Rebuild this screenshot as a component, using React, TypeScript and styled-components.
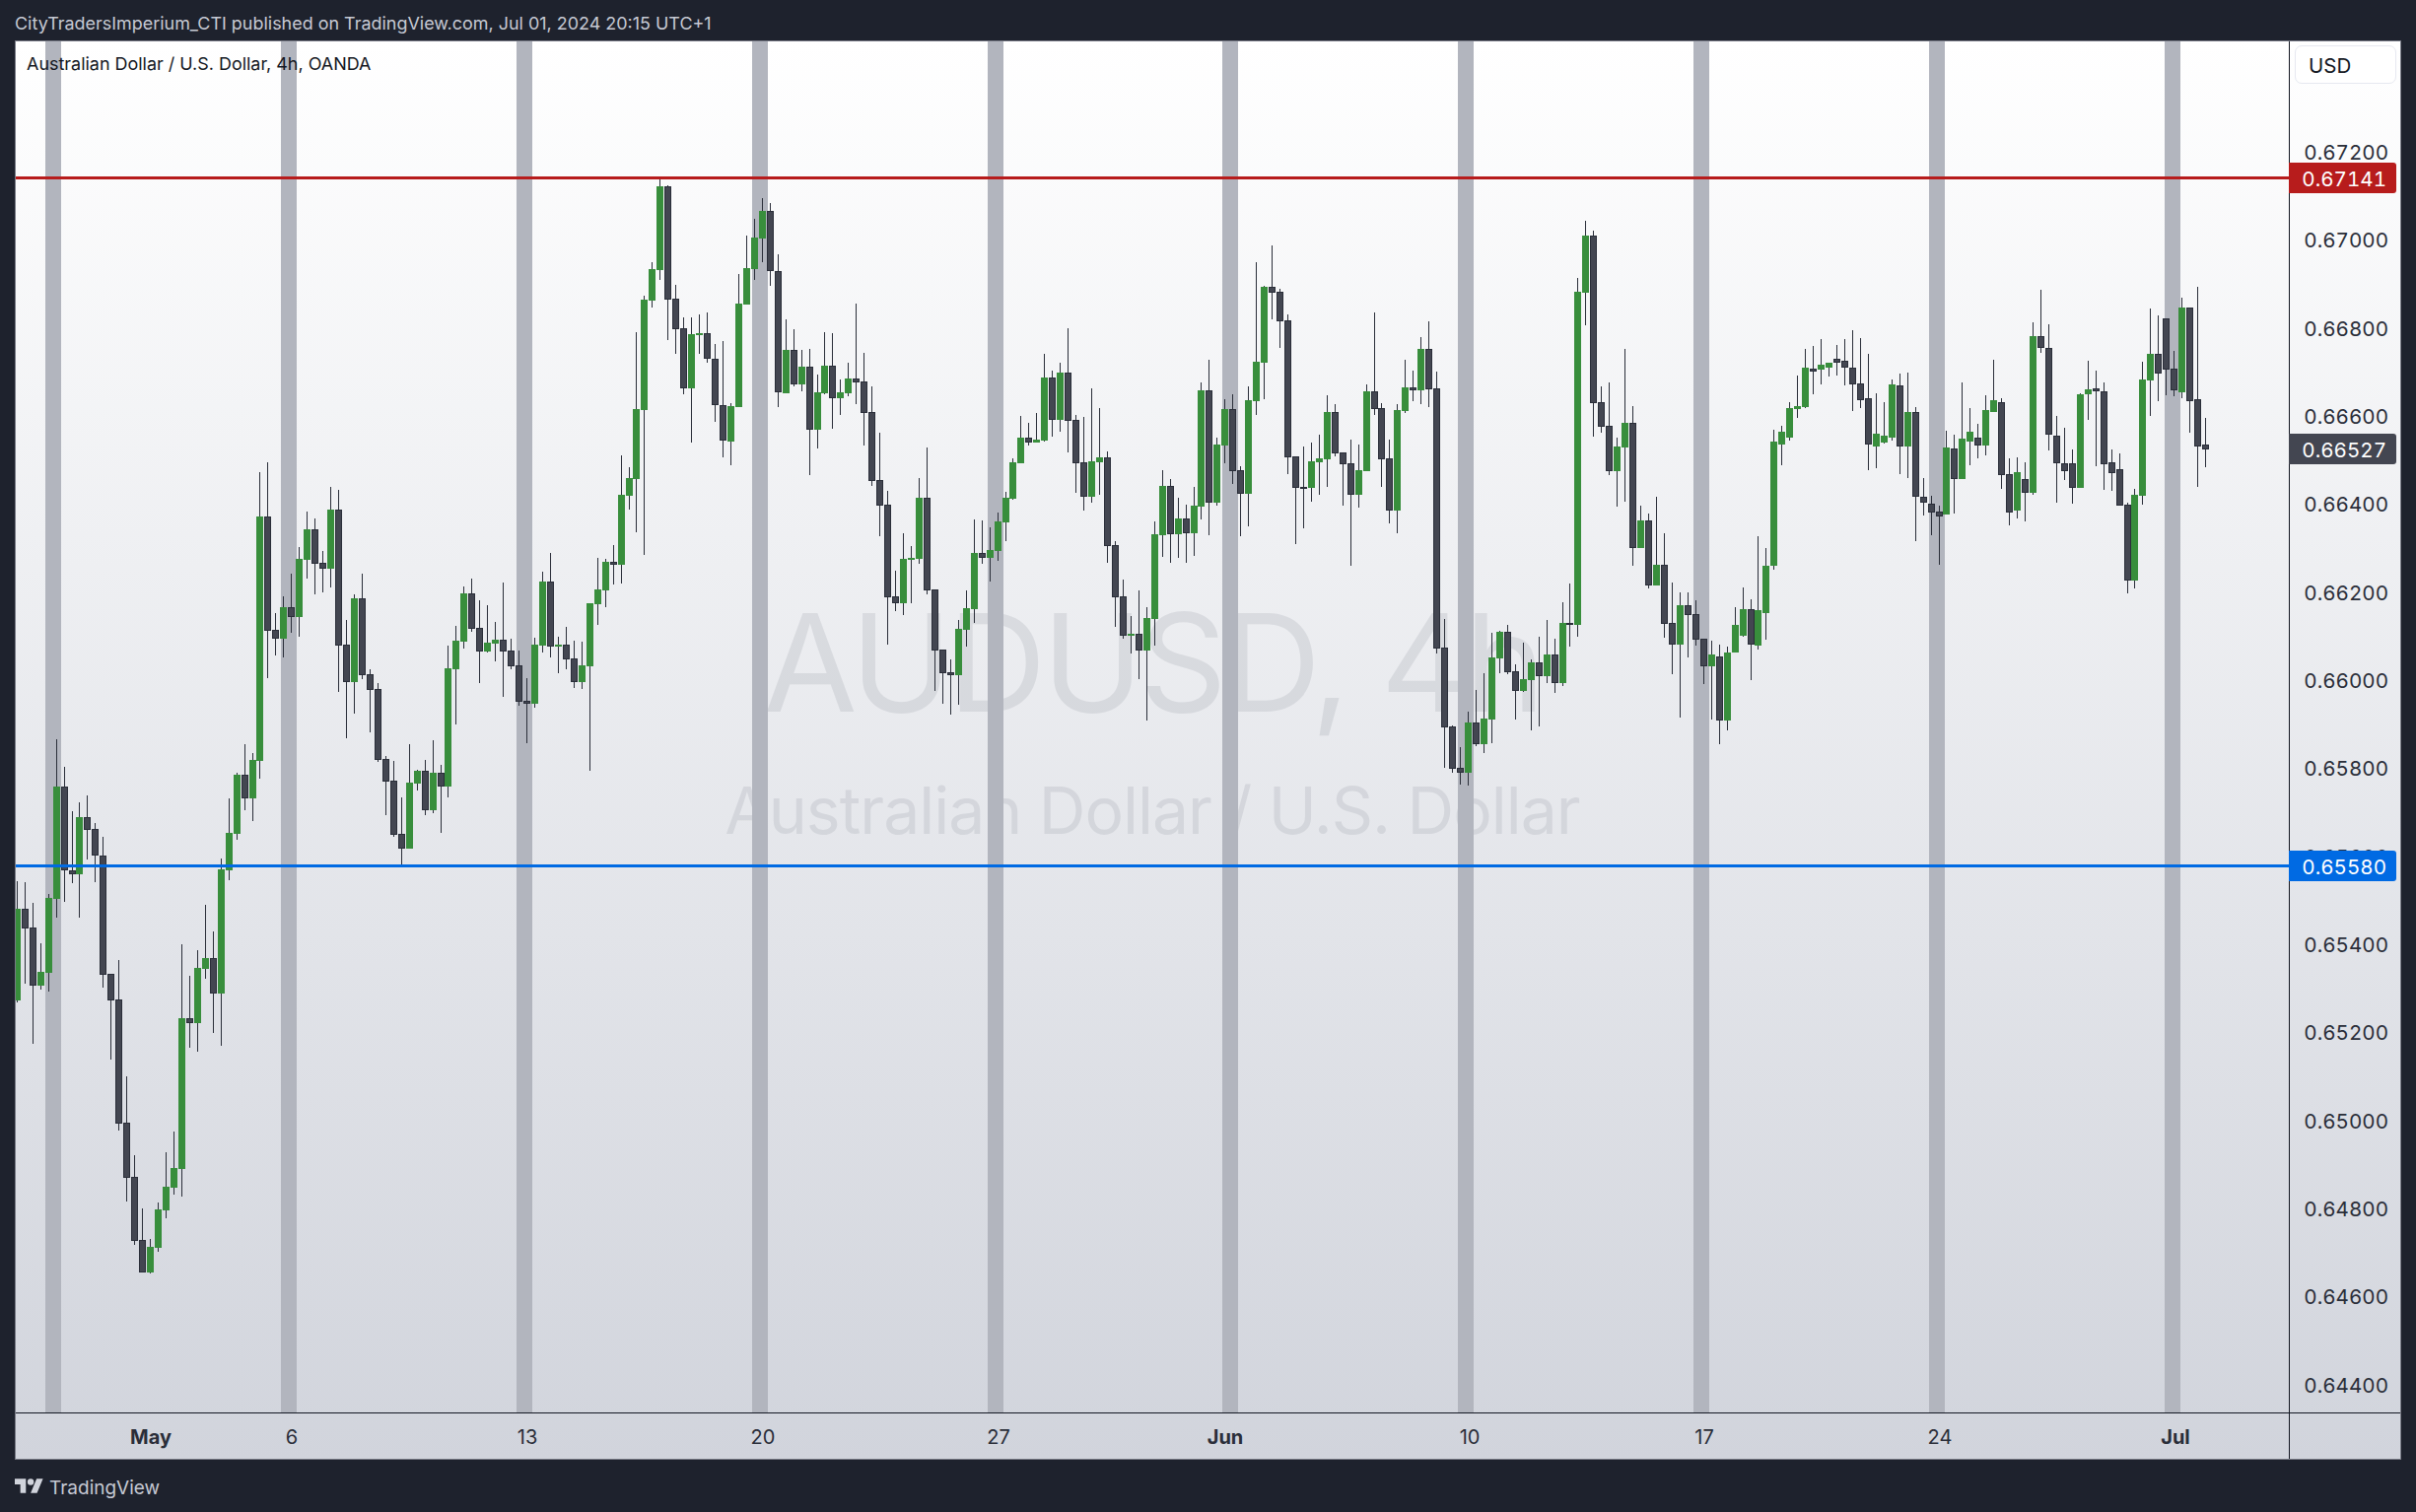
import React from 'react';
import styled, {createGlobalStyle} from 'styled-components';

const GlobalStyle = createGlobalStyle`
  html, body {
    margin: 0;
    padding: 0;
    background: #1e222d;
  }
  * {
    box-sizing: border-box;
  }
`

const Page = styled.div`
  display: grid;
  grid-template-rows: 41px 1440px 53px;
  width: 2451px;
  height: 1534px;
  background: #1e222d;
  font-family: Inter, "Liberation Sans", sans-serif;
`
const TopBar = styled.div`
  display: flex;
  align-items: center;
  padding: 5px 0 0 15px;
  font-size: 17.95px;
  color: #c6c9d3;
  white-space: nowrap;
`
const Pane = styled.div`
  display: grid;
  grid-template-columns: 1fr 113px;
  grid-template-rows: 1391px 47px;
  margin: 0 15px;
  border: 1px solid #787b86;
  background: linear-gradient(180deg, #ffffff 0%, #d1d4dc 100%);
`
const Plot = styled.div`
  position: relative;
  overflow: hidden;
`
const Legend = styled.div`
  position: absolute;
  z-index: 2;
  top: 12px;
  left: 11px;
  font-size: 17.95px;
  line-height: 22px;
  color: #131722;
`
const Watermark = styled.div`
  position: absolute;
  inset: 0;
  display: flex;
  flex-direction: column;
  align-items: center;
  justify-content: center;
  gap: 20px;
  padding-bottom: 21px;
  color: rgba(120, 123, 134, .16);
  white-space: nowrap;
`
const WatermarkMain = styled.div`
  font-size: 138px;
  line-height: 170px;
  letter-spacing: -4px;
`
const WatermarkSub = styled.div`
  font-size: 66px;
  line-height: 90px;
  letter-spacing: -1px;
`
const ChartSvg = styled.svg`
  position: absolute;
  inset: 0;
  display: block;
  width: 100%;
  height: 100%;
`
const PriceAxis = styled.div`
  position: relative;
  display: flex;
  flex-direction: column;
  justify-content: space-between;
  align-items: flex-end;
  padding: 112.5px 12px 27.5px 0;
  border-left: 1px solid #131722;
`
const PriceTick = styled.div`
  display: flex;
  align-items: center;
  height: 0;
  font-size: 20.6px;
  font-variant-numeric: tabular-nums;
  color: #2a2e39;
`
const CurrencyBox = styled.div`
  position: absolute;
  top: 4px;
  left: 5px;
  display: flex;
  align-items: center;
  width: 103px;
  height: 39px;
  padding: 1px 0 0 13px;
  font-size: 20.5px;
  color: #131722;
  background: #fff;
  border: 1.5px solid #e6e8f0;
  border-radius: 7px;
`
const PriceTag = styled.div<{ $top: number, $color: string }>`
  position: absolute;
  top: ${props => props.$top}px;
  left: -1px;
  display: flex;
  align-items: center;
  justify-content: flex-end;
  width: 109px;
  height: 31px;
  padding: 1px 10px 0 0;
  font-size: 20.6px;
  font-variant-numeric: tabular-nums;
  color: #fff;
  background: ${props => props.$color};
  border-radius: 0 3px 3px 0;
`
const TimeAxis = styled.div`
  display: flex;
  align-items: center;
  padding-top: 1px;
  border-top: 1px solid #131722;
`
const TimeTick = styled.div<{ $gap: number, $major?: boolean }>`
  display: flex;
  justify-content: center;
  width: 0;
  margin-left: ${props => props.$gap}px;
  font-size: 20px;
  font-weight: ${props => props.$major ? 700 : 400};
  color: #2a2e39;
  white-space: nowrap;
`
const AxisCorner = styled.div`
  border-left: 1px solid #131722;
  border-top: 1px solid #131722;
`
const Footer = styled.div`
  display: flex;
  align-items: center;
  gap: 6px;
  padding: 0 0 1px 15px;
  color: #c6c9d3;
`
const FooterLabel = styled.span`
  padding-top: 4px;
  font-size: 19px;
`
const LogoMark = styled.svg`
  display: block;
  width: 29px;
  height: 15px;
  fill: #d1d4dc;
`

// candles read off the screenshot: [up, wick top, body top, body bottom, wick bottom]
// y = y0 + value / scale
type Row = [number, number, number, number, number]
const segments: { y0: number, scale: number, rows: Row[] }[] = [
  {y0: 700, scale: 2.529, rows: [
    [1,491,561,797,801],[0,493,561,611,754],[0,546,609,758,909],[1,650,723,759,770],[1,524,534,726,774],
    [1,126,248,536,584],[0,197,248,464,544],[0,311,463,472,496],[1,288,326,473,584],[0,271,326,358,435],
    [0,341,357,426,493],[0,377,425,730,764],[0,728,728,796,948],[0,693,795,1112,1130],[0,991,1110,1251,1313],
    [0,1194,1250,1413,1424],[0,1330,1412,1494,1494],[1,1409,1429,1495,1497],[1,1315,1333,1431,1442],[1,1186,1275,1335,1356],
    [1,1133,1227,1277,1295],[1,652,842,1229,1300],[0,733,842,854,918],[1,668,713,855,928],[1,551,688,716,741],
    [0,620,688,778,880],[1,432,460,779,913],[1,278,367,463,488],[1,212,217,369,384],[0,139,217,277,309],
    [1,162,180,278,336],
  ]},
  {y0: 440, scale: 3, rows: [
    [1,117,252,995,1050],[0,87,252,599,744],[0,546,597,623,675],[1,495,528,624,681],[0,426,528,557,606],
    [1,345,381,558,618],[1,237,291,384,441],[0,258,291,395,489],[0,357,393,410,483],[1,162,231,411,468],
    [0,171,231,644,786],[0,567,642,755,927],[1,489,501,756,852],[0,426,501,734,747],[0,717,733,779,909],
    [0,759,777,992,999],[0,981,990,1058,1161],[0,996,1056,1220,1227],[0,1107,1218,1262,1315],[1,945,1062,1263,1263],
    [1,1023,1026,1065,1086],[0,993,1026,1145,1161],[1,933,1032,1146,1155],[0,1008,1032,1073,1215],[1,645,714,1074,1107],
    [1,585,630,717,885],[1,465,486,633,654],[0,441,486,593,603],[0,507,591,662,759],[1,522,636,663,666],
    [1,573,627,639,693],[0,453,627,662,801],[0,624,660,707,717],[0,660,705,815,828],[0,744,813,821,942],
    [1,621,642,822,834],[1,420,450,645,666],[0,363,450,647,681],[1,618,642,648,729],[0,588,642,686,717],
    [0,630,684,755,774],[1,633,705,756,777],[1,516,516,708,1026],[1,378,474,519,582],[1,381,390,477,528],
    [0,339,390,399,459],[1,66,186,399,456],[1,102,135,189,231],
  ]},
  {y0: 160, scale: 2.529, rows: [
    [1,448,645,824,961],[1,354,364,647,1019],[1,268,286,367,384],[1,52,73,288,314],[0,70,73,363,468],
    [0,326,362,439,503],[0,410,438,591,607],[1,410,453,592,731],[1,402,450,453,503],[0,397,450,517,526],
    [0,478,516,636,678],[0,470,635,727,769],[1,630,637,728,789],[1,298,374,640,640],[1,200,283,377,377],
    [1,157,205,286,314],[1,104,137,207,268],[0,116,137,292,329],[0,248,291,603,640],[1,415,493,604,604],
    [0,440,493,581,587],[1,493,536,582,599],[0,491,536,697,814],[1,556,602,698,746],[1,448,534,604,607],
    [0,450,534,616,695],[1,569,602,617,660],[1,526,567,604,612],[0,374,567,577,632],[0,501,574,654,738],
    [0,587,652,829,842],[0,706,827,892,971],[0,855,890,1127,1249],[0,1060,1125,1142,1163],[1,964,1029,1143,1173],
    [1,996,1027,1030,1143],[1,822,873,1029,1042],[0,744,873,1109,1120],[0,1108,1108,1264,1368],[0,1262,1262,1322,1401],
    [0,1287,1320,1327,1429],[1,1187,1209,1328,1404],[1,1110,1156,1211,1254],[1,928,1014,1158,1194],[0,931,1014,1026,1042],
    [1,948,1007,1027,1087],[1,910,933,1009,1034],[1,857,873,936,984],[1,771,781,875,878],[1,663,718,784,784],
    [0,680,718,730,738],[1,655,723,731,731],
  ]},
  {y0: 300, scale: 3, rows: [
    [1,177,249,441,444],[0,228,249,377,429],[1,204,234,378,414],[0,99,234,380,477],[0,363,378,509,600],
    [0,369,507,611,654],[1,282,504,612,630],[1,342,492,507,606],[0,474,492,761,813],[0,747,759,917,1008],
    [0,864,915,1034,1044],[1,975,1029,1032,1089],[0,897,1029,1079,1167],[1,948,981,1080,1293],[1,687,726,984,1065],
    [1,531,579,729,795],[0,558,579,725,813],[1,615,678,726,798],[0,636,678,722,813],[1,582,639,723,792],
    [1,264,288,642,681],[0,195,288,629,729],[1,432,453,630,639],[1,315,345,456,510],[0,300,345,533,573],
    [0,519,531,602,732],[1,276,318,603,702],
  ]},
  {y0: 0, scale: 1, rows: [
    [1,266,367,407,421],[1,290,291,368,405],[0,249,291,297,324],[0,293,296,326,353],
  ]},
  {y0: 300, scale: 3, rows: [
    [0,57,75,491,543],[0,489,489,584,756],[0,459,582,585,708],[1,447,504,585,627],[1,423,495,507,606],
    [1,303,354,498,582],[0,330,354,480,489],[0,477,477,513,639],[0,438,510,605,822],[1,453,531,606,645],
    [1,270,291,534,534],[0,51,291,344,363],[0,327,342,497,582],[0,438,495,653,693],[1,330,348,654,723],
    [1,195,279,351,357],[0,228,279,287,321],[1,126,162,288,330],[0,78,162,284,339],
    [0,231,283,1073,1089],[0,984,1072,1313,1436],[0,1308,1312,1439,1451],[0,1374,1438,1451,1487],[1,1266,1299,1452,1490],
    [0,1200,1300,1364,1370],[1,1149,1287,1365,1391],[1,1026,1101,1290,1361],[1,1020,1023,1104,1148],[0,1002,1023,1145,1151],
    [0,1122,1144,1202,1289],[1,1056,1167,1203,1206],[1,1107,1116,1170,1322],[0,1038,1116,1157,1310],[1,987,1092,1158,1178],
    [0,1044,1092,1178,1208],[1,933,996,1179,1187],[0,876,996,1001,1067],
  ]},
  {y0: 0, scale: 1, rows: [
    [1,282,296,634,646],[1,224,239,297,330],[0,234,239,409,443],
  ]},
  {y0: 300, scale: 3, rows: [
    [0,276,325,398,417],[0,264,397,533,546],[1,432,459,534,642],[1,162,387,462,627],[0,336,387,767,822],
    [1,639,684,768,768],[0,663,684,881,891],[1,612,819,882,882],[0,723,819,998,1041],[0,873,996,1061,1152],
    [1,903,942,1062,1284],[0,903,942,971,1101],[0,927,969,1046,1064],[0,1044,1044,1127,1182],[1,1050,1092,1128,1290],
    [0,1062,1098,1292,1364],[1,1068,1086,1293,1322],[1,948,1002,1086,1086],[1,888,954,1035,1038],[0,924,954,1061,1170],
    [1,732,957,1065,1077],[1,768,822,966,1047],[1,408,444,822,834],[1,396,414,453,516],[1,324,342,432,441],
    [1,243,336,345,372],[1,162,219,339,342],[0,153,222,231,300],[1,132,210,225,270],
  ]},
  {y0: 280, scale: 3, rows: [
    [1,264,264,279,306],[0,210,252,263,303],[0,192,258,278,333],[0,165,279,329,411],[0,189,327,377,402],
    [0,237,372,513,591],[1,357,480,519,585],[1,384,486,507,510],[1,315,330,492,501],[0,297,333,518,603],
    [1,294,414,519,615],[0,399,414,671,807],[0,615,672,689,729],[0,669,693,719,789],[0,699,717,731,879],
    [1,471,522,726,726],[0,483,525,617,723],[1,324,495,618,618],[1,402,474,504,576],[0,450,492,515,555],
    [1,363,408,516,546],[1,255,378,414,414],[0,372,384,605,648],[0,555,603,719,759],[1,552,597,714,738],
    [0,567,618,659,747],[1,141,183,660,666],[0,42,183,218,234],[0,147,219,482,531],[0,426,486,569,690],
    [0,462,570,593,621],[0,528,570,644,693],[1,357,360,645,645],[1,258,345,360,438],[0,288,342,350,579],
    [0,324,351,572,651],[0,528,567,599,654],[0,540,588,698,698],[0,690,696,926,966],[1,648,666,927,951],
    [1,261,315,669,696],[1,99,237,318,426],[0,120,237,296,381],[0,129,129,284,363],[0,228,282,347,366],
    [1,66,96,354,372],[0,96,96,380,477],[0,33,375,518,642],[0,432,513,527,582],
  ]},
]

const candles = segments.flatMap(seg => seg.rows.map(([up, wt, bt, bb, wb]) => ({
  up: up === 1,
  wickTop: seg.y0 + wt / seg.scale,
  bodyTop: seg.y0 + bt / seg.scale,
  bodyBottom: seg.y0 + bb / seg.scale,
  wickBottom: seg.y0 + wb / seg.scale,
})))

const stripes = [46, 285, 524, 763, 1002, 1240, 1479, 1718, 1957, 2196]
const priceTicks = ['0.67200', '0.67000', '0.66800', '0.66600', '0.66400', '0.66200', '0.66000', '0.65800',
  '0.65600', '0.65400', '0.65200', '0.65000', '0.64800', '0.64600', '0.64400']
const timeTicks = [
  {label: 'May', x: 153, major: true},
  {label: '6', x: 296},
  {label: '13', x: 535},
  {label: '20', x: 774},
  {label: '27', x: 1013},
  {label: 'Jun', x: 1243, major: true},
  {label: '10', x: 1491},
  {label: '17', x: 1729},
  {label: '24', x: 1968},
  {label: 'Jul', x: 2207, major: true},
]

const UP = '#388e3c'
const DOWN = '#434651'
const WICK = '#2a2e39'

function Candle({index, up, wickTop, bodyTop, bodyBottom, wickBottom}: typeof candles[number] & { index: number }) {
  const cx = Math.round(17.3 + 7.958 * index - 0.5)
  const left = cx - 3
  const top = Math.round(bodyTop)
  const height = Math.max(Math.round(bodyBottom) - top, 2)
  return (
    <g>
      <rect x={cx} y={wickTop} width={1} height={wickBottom - wickTop} fill={WICK}/>
      {up
        ? <rect x={left} y={top} width={7} height={height} fill={UP}/>
        : <rect x={left + .5} y={top + .5} width={6} height={height - 1} fill={DOWN} stroke={WICK}/>}
    </g>
  )
}

function App() {
  return (
    <Page>
      <GlobalStyle/>
      <TopBar>CityTradersImperium_CTI published on TradingView.com, Jul 01, 2024 20:15 UTC+1</TopBar>
      <Pane>
        <Plot>
          <Watermark>
            <WatermarkMain>AUDUSD, 4h</WatermarkMain>
            <WatermarkSub>Australian Dollar / U.S. Dollar</WatermarkSub>
          </Watermark>
          <ChartSvg viewBox="16 42 2306 1391" preserveAspectRatio="none" shapeRendering="crispEdges">
            {stripes.map(x => <rect key={x} x={x} y={42} width={16} height={1391} fill="#b2b5be"/>)}
            {candles.map((c, i) => <Candle key={i} index={i} {...c}/>)}
            <rect x={16} y={179} width={2306} height={3} fill="#b71c1c"/>
            <rect x={16} y={877} width={2306} height={3} fill="#006ae3"/>
          </ChartSvg>
          <Legend>Australian Dollar / U.S. Dollar, 4h, OANDA</Legend>
        </Plot>
        <PriceAxis>
          <CurrencyBox>USD</CurrencyBox>
          {priceTicks.map(p => <PriceTick key={p}>{p}</PriceTick>)}
          <PriceTag $top={123} $color="#b71c1c">0.67141</PriceTag>
          <PriceTag $top={398} $color="#434651">0.66527</PriceTag>
          <PriceTag $top={821} $color="#006ae3">0.65580</PriceTag>
        </PriceAxis>
        <TimeAxis>
          {timeTicks.map((t, i) => (
            <TimeTick key={t.label} $major={t.major} $gap={t.x - (i ? timeTicks[i - 1].x : 16)}>{t.label}</TimeTick>
          ))}
        </TimeAxis>
        <AxisCorner/>
      </Pane>
      <Footer>
        <LogoMark viewBox="0 4 36 18">
          <path d="M14 22H7V11H0V4h14v18zM28 22h-8l7.5-18h8L28 22z"/>
          <circle cx="20" cy="8" r="4"/>
        </LogoMark>
        <FooterLabel>TradingView</FooterLabel>
      </Footer>
    </Page>
  );
}

export default App;
